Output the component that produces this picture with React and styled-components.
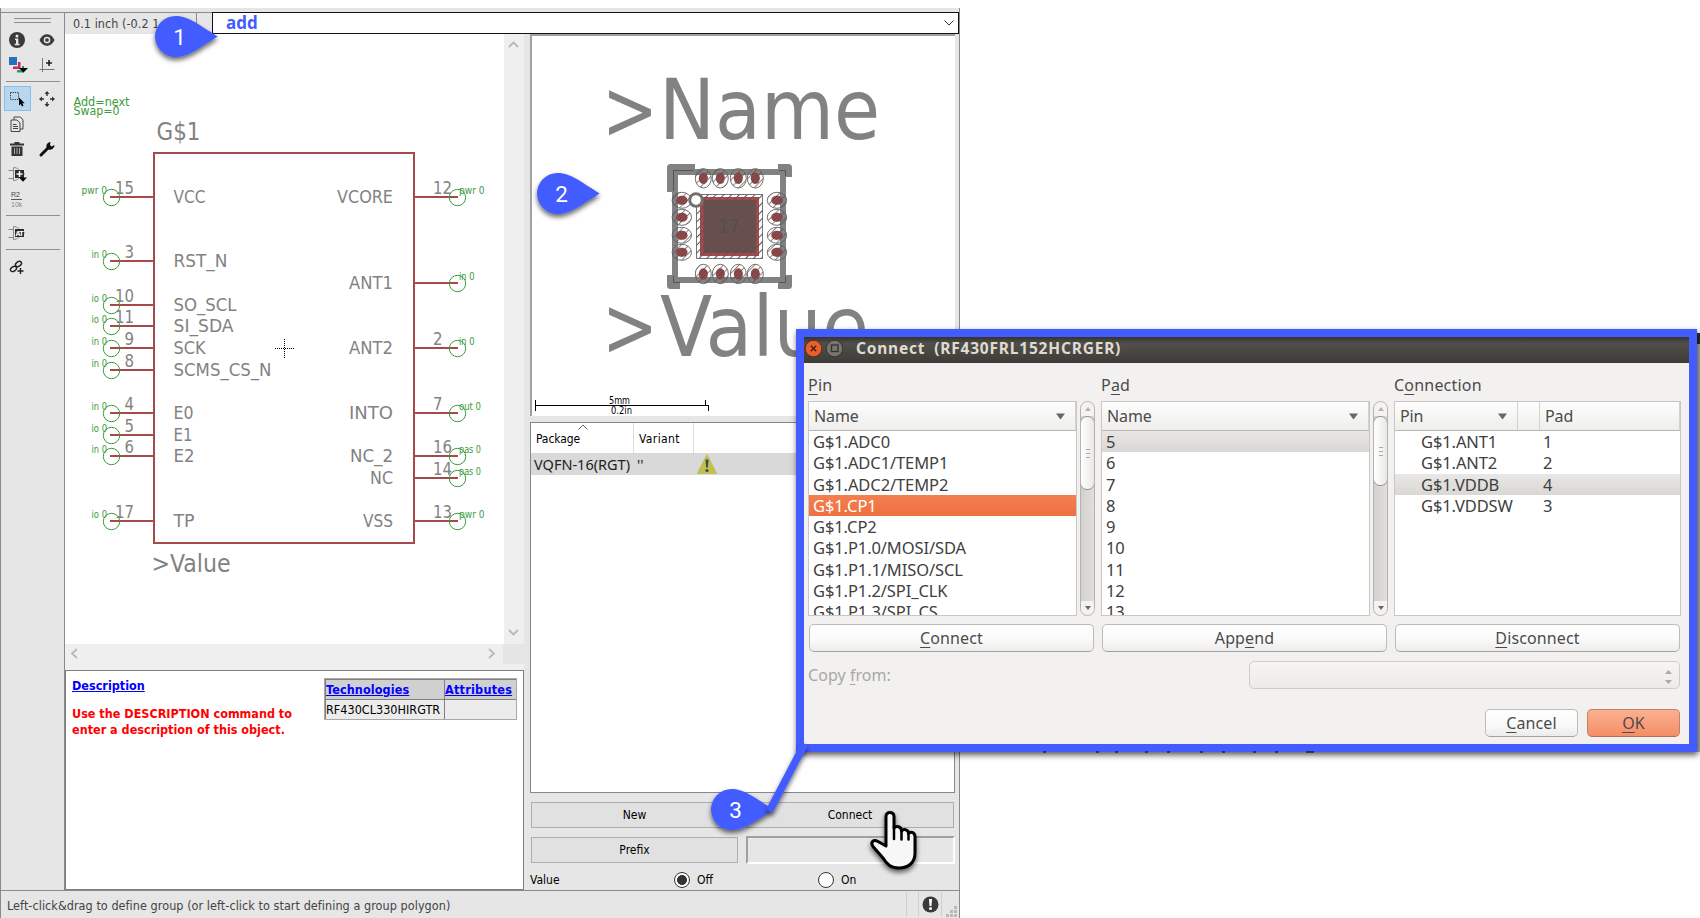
import React from 'react';
import styled, { createGlobalStyle, css } from 'styled-components';

const BLUE = '#435cff';
const RED = '#a54a4a';
const GREY = '#828282';
const GREEN = '#3c9a3c';
const TAHOMA = '"DejaVu Sans Condensed", "DejaVu Sans", sans-serif';
const UBUNTU = '"Noto Sans", "Open Sans", sans-serif';

const Global = createGlobalStyle`
  * { box-sizing: border-box; }
  body { margin: 0; background: #fff; font-family: ${TAHOMA}; font-size: 12px; overflow: hidden; }
  svg { display: block; }
`;

const Desktop = styled.div`
  position: relative;
  width: 1700px;
  height: 918px;
  overflow: hidden;
  padding-top: 8px;
`;

/* ---------- main editor window ---------- */
const Window = styled.div`
  width: 960px;
  height: 910px;
  background: #e6e6e6;
  border-left: 1px solid #8a8a8a;
  border-right: 1px solid #8a8a8a;
  display: flex;
  flex-direction: column;
`;
const TopEdge = styled.div`
  height: 5px;
  border-bottom: 1px solid #8a8a8a;
`;
const Work = styled.div`
  display: flex;
  height: 877px;
`;
const Toolbar = styled.div`
  width: 64px;
  border-right: 1px solid #8a8a8a;
  padding: 5px 4px 0 3px;
`;
const Handle = styled.div`
  height: 5px;
  margin: 0 9px 4px 10px;
  border-top: 1px solid #8f8f8f;
  border-bottom: 1px solid #8f8f8f;
`;
const ToolGroup = styled.div`
  display: grid;
  grid-template-columns: 27px 33px;
  grid-auto-rows: 25px;
`;
const ToolSep = styled.div`
  height: 1px;
  margin: 4px 0 4px 2px;
  background: #8f8f8f;
`;
const Tool = styled.div`
  display: flex;
  align-items: center;
  justify-content: center;
  padding-right: 1px;
  ${(p) => p.$active && css`
    background: #b8d6ee;
    box-shadow: inset 0 0 0 1px #86bdea;
  `}
`;
const Main = styled.div`
  flex: 1;
  display: flex;
  flex-direction: column;
`;
const CommandRow = styled.div`
  height: 21px;
  display: flex;
`;
const Coords = styled.div`
  width: 132px;
  border-right: 1px solid #8a8a8a;
  padding-left: 8px;
  line-height: 21px;
  color: #444;
  font-size: 12.5px;
  letter-spacing: 0.05px;
  white-space: nowrap;
`;
const Combo = styled.div`
  margin-left: 15px;
  flex: 1;
  margin-top: -1px;
  height: 22px;
  border: 1px solid #111;
  background: #fff;
  display: flex;
  align-items: center;
  justify-content: space-between;
  padding: 0 4px 0 13px;
  color: ${BLUE};
  font: bold 17px/20px "Open Sans", sans-serif;
`;
const Panes = styled.div`
  flex: 1;
  display: flex;
`;
const LeftPane = styled.div`
  width: 459px;
  display: flex;
  flex-direction: column;
`;
const SymbolArea = styled.div`
  display: flex;
  height: 610px;
`;
const SymbolCanvas = styled.div`
  width: 439px;
  background: #fff;
`;
const VScroll = styled.div`
  width: 20px;
  background: #efefef;
  display: flex;
  flex-direction: column;
  align-items: center;
  justify-content: space-between;
  padding: 7px 2px 8px 0;
`;
const HScroll = styled.div`
  height: 26px;
  background: #efefef;
  display: flex;
  align-items: flex-start;
  justify-content: space-between;
  padding-left: 5px;
`;
const HArrow = styled.div`
  padding-top: 4px;
  margin-left: ${(p) => p.$left || 0};
`;
const Corner = styled.div`
  width: 21px;
  height: 20px;
  background: #e5e5e5;
  margin-left: 7px;
`;
const DescriptionBox = styled.div`
  flex: 1;
  border: 1px solid #7f7f7f;
  background: #fff;
  display: flex;
  justify-content: space-between;
  padding: 7px 6px 0 6px;
  font-weight: bold;
  font-size: 12.5px;
`;
const DescText = styled.div`
  color: #f00;
  line-height: 16px;
  white-space: nowrap;
  letter-spacing: 0;
`;
const HeadLink = styled.span`
  display: block;
  color: #00f;
  text-decoration: underline;
  letter-spacing: ${(p) => p.$ls || '0'};
  margin-bottom: ${(p) => p.$gap || 0};
`;
const TechTable = styled.div`
  display: grid;
  grid-template-columns: 118px 71px;
  grid-template-rows: 19px 19px;
  gap: 1px;
  padding: 1px;
  width: 193px;
  height: 42px;
  background: #808080;
  border: 1px solid #a8a8a8;
  white-space: nowrap;
`;
const TechCell = styled.div`
  background: ${(p) => (p.$head ? '#d0d0d0' : '#ececec')};
  line-height: 19px;
  font-weight: ${(p) => (p.$head ? 'bold' : 'normal')};
  letter-spacing: 0.02px;
  color: #000;
  overflow: hidden;
`;

const RightPane = styled.div`
  flex: 1;
  padding: 0 4px 0 6px;
  display: flex;
  flex-direction: column;
`;
const PackageCanvas = styled.div`
  height: 382px;
  border-left: 2px solid #a0a0a0;
  border-top: 2px solid #a0a0a0;
  background: #fff;
  overflow: hidden;
`;
const PackageTable = styled.div`
  margin-top: 6px;
  height: 371px;
  border: 1px solid #828790;
  background: #fff;
`;
const TableHead = styled.div`
  height: 30px;
  display: flex;
`;
const Th = styled.div`
  position: relative;
  width: ${(p) => p.$w}px;
  border-right: 1px solid #dcdcdc;
  padding-left: 5px;
  line-height: 32px;
  letter-spacing: ${(p) => p.$ls || '-0.1px'};
`;
const SortMark = styled.svg`
  position: absolute;
  left: 47px;
  top: 1px;
`;
const TableRow = styled.div`
  height: 22px;
  background: #d9d9d9;
  display: flex;
  align-items: center;
  padding-left: 3px;
  font: 14.5px/21px "Noto Sans", sans-serif;
  letter-spacing: 0;
  color: #222;
`;
const RowCell = styled.div`
  width: ${(p) => p.$w}px;
  white-space: nowrap;
`;
const ButtonGrid = styled.div`
  margin: 9px 1px 0 1px;
  display: grid;
  grid-template-columns: 207px 208px;
  grid-auto-rows: 26px;
  justify-content: space-between;
  row-gap: 9px;
`;
const WinButton = styled.div`
  border: 1px solid #adadad;
  background: #e1e1e1;
  text-align: center;
  line-height: 24px;
`;
const PrefixField = styled.div`
  margin: -1px -1px 0 0;
  height: 28px;
  border: 2px solid #a0a0a0;
  border-right-color: #fff;
  border-bottom-color: #fff;
`;
const ValueRow = styled.div`
  display: grid;
  grid-template-columns: 144px 144px 1fr;
  align-items: center;
  height: 18px;
  margin-top: 8px;
`;
const RadioLabel = styled.div`
  display: flex;
  align-items: center;
  gap: 7px;
`;
const Radio = styled.div`
  width: 16px;
  height: 16px;
  border-radius: 50%;
  border: 1px solid #333;
  background: ${(p) => (p.$on ? 'radial-gradient(circle, #333 0 4.6px, #fff 5.3px)' : '#fff')};
`;
const StatusBar = styled.div`
  height: 28px;
  border-top: 1px solid #8a8a8a;
  display: flex;
  justify-content: space-between;
  padding-left: 6px;
  line-height: 30px;
  color: #444;
  font-size: 12.5px;
  letter-spacing: 0.06px;
  white-space: nowrap;
`;
const StatusCells = styled.div`
  display: flex;
  padding-top: 1px;
`;
const StatusCell = styled.div`
  width: ${(p) => p.$w}px;
  height: 25px;
  border-left: 1px solid #d0d0d0;
  display: flex;
  align-items: center;
  justify-content: center;
`;

/* ---------- Connect dialog ---------- */
const BackWindow = styled.div`
  position: absolute;
  left: 1680px;
  top: 333px;
  width: 20px;
  height: 419px;
  background: #b4b4b4;
  border-top: 11px solid #2d2d2b;
`;
const Dialog = styled.div`
  position: absolute;
  left: 796px;
  top: 329px;
  width: 901px;
  height: 423px;
  border: 8px solid ${BLUE};
  background: #f2f1ef;
  box-shadow: 1px 3px 6px rgba(0, 0, 0, 0.65);
  font-family: ${UBUNTU};
  font-size: 16px;
  color: #4b4b4b;
`;
const TitleBar = styled.div`
  height: 26px;
  background: linear-gradient(#34332f, #504f49 25%, #3d3c38);
  display: flex;
  align-items: center;
  color: #dfdbd2;
  font: bold 15.5px/22px ${UBUNTU};
  letter-spacing: 0.8px;
  word-spacing: 4px;
  white-space: pre;
`;
const TitleText = styled.span`
  margin: -4px 0 0 13px;
`;
const DialogBody = styled.div`
  padding: 12px 8px 0 4px;
`;
const Columns = styled.div`
  display: grid;
  grid-template-columns: repeat(3, 287px);
  column-gap: 6px;
`;
const Caption = styled.div`
  height: 26px;
  line-height: 20px;
  letter-spacing: 0.2px;
  u { text-underline-offset: 3px; text-decoration-thickness: 1px; }
`;
const ListRow = styled.div`
  display: flex;
  justify-content: space-between;
`;
const ListBox = styled.div`
  width: ${(p) => p.$w}px;
  height: 215px;
  border: 1px solid #c9c7c3;
  background: #fff;
  overflow: hidden;
`;
const ListHead = styled.div`
  height: 29px;
  border-bottom: 1px solid #b9b7b3;
  background: linear-gradient(#fdfdfd, #efeeec);
  display: flex;
`;
const HeadCell = styled.div`
  width: ${(p) => p.$w};
  display: flex;
  align-items: center;
  justify-content: space-between;
  padding: 0 10px 0 5px;
  letter-spacing: -0.1px;
  border-right: 1px solid #d4d2ce;
`;
const Item = styled.div`
  height: 21.3px;
  line-height: 22px;
  padding-left: ${(p) => (p.$indent ? 26 : 4)}px;
  display: flex;
  white-space: nowrap;
  font-size: 16.5px;
  letter-spacing: -0.1px;
  color: ${(p) => (p.$tone === 'hot' ? '#fff' : '#404040')};
  ${(p) => p.$tone === 'hot' && css`background: linear-gradient(#f47f50, #ee7040);`}
  ${(p) => p.$tone === 'grey' && css`background: linear-gradient(#e8e7e5, #d9d8d5);`}
`;
const ItemPin = styled.span`
  width: 122px;
`;
const Scroll = styled.div`
  width: 15px;
  height: 215px;
  border: 1px solid #b5b3af;
  border-radius: 8px;
  background: linear-gradient(90deg, #d2d1ce, #e0dfdc);
  display: flex;
  flex-direction: column;
  overflow: hidden;
`;
const ScrollEnd = styled.div`
  height: 14px;
  background: #f4f3f2;
  display: flex;
  align-items: center;
  justify-content: center;
`;
const Thumb = styled.div`
  height: ${(p) => p.$h}px;
  margin: 0 -1px;
  border: 1px solid #979592;
  border-radius: 7px;
  background: linear-gradient(90deg, #fff, #e9e8e6);
  display: flex;
  align-items: center;
  justify-content: center;
`;
const Filler = styled.div`
  flex: 1;
`;
const DlgButton = styled.div`
  width: ${(p) => p.$w}px;
  height: 28px;
  line-height: 26px;
  text-align: center;
  border: 1px solid ${(p) => (p.$primary ? '#c28268' : '#bebcb8')};
  border-bottom-color: ${(p) => (p.$primary ? '#b0705a' : '#a5a3a0')};
  border-radius: 5px;
  background: ${(p) => (p.$primary ? 'linear-gradient(#fcb092, #f48e66)' : 'linear-gradient(#fefefe, #fafafa 55%, #edeceb)')};
  letter-spacing: 0.12px;
  u { text-underline-offset: 3px; text-decoration-thickness: 1px; }
`;
const ButtonsRow = styled(Columns)`
  margin-top: 8px;
  padding-left: 1px;
`;
const CopyRow = styled.div`
  margin-top: 9px;
  display: flex;
  justify-content: space-between;
  line-height: 29px;
  color: #a9a8a6;
  letter-spacing: 0.05px;
  u { text-underline-offset: 3px; text-decoration-thickness: 1px; }
`;
const CopyCombo = styled.div`
  width: 431px;
  height: 28px;
  margin-right: 1px;
  border: 1px solid #cfcdc9;
  border-radius: 5px;
  background: linear-gradient(#f6f5f4, #ecebe9);
  display: flex;
  align-items: center;
  justify-content: flex-end;
  padding: 4px 7px 0 0;
`;
const ActionRow = styled.div`
  margin-top: 19px;
  display: flex;
  justify-content: flex-end;
  gap: 9px;
  padding-right: 1px;
`;

const Overlay = styled.svg`
  position: absolute;
  left: 0;
  top: 0;
  pointer-events: none;
`;

/* ---------- toolbar icons ---------- */
const InfoIcon = () => (
  <svg width="18" height="18" viewBox="0 0 18 18">
    <circle cx="9" cy="9" r="8" fill="#3a3a3a" />
    <path d="M7 7.5h3.3v5.3h1.2v1.4H6.7v-1.4H8V9H7z" fill="#e6e6e6" />
    <circle cx="9" cy="4.9" r="1.5" fill="#e6e6e6" />
  </svg>
);
const EyeIcon = () => (
  <svg width="18" height="14" viewBox="0 0 18 14">
    <path d="M1.5 7C4 2.2 7 1.2 9 1.2S14 2.2 16.5 7C14 11.8 11 12.8 9 12.8S4 11.8 1.5 7z" fill="#3a3a3a" />
    <circle cx="9" cy="7" r="2.6" fill="none" stroke="#e6e6e6" strokeWidth="1.5" />
  </svg>
);
const LayersIcon = () => (
  <svg width="22" height="20" viewBox="0 0 22 20">
    <path d="M3 2h8v8H3z" fill="#2472b8" />
    <path d="M12 7h2.5v7H7v-2.500h5z" fill="#d6245c" />
    <path d="M16 11h2v6.500h-7V15h5z" fill="#2a9a5a" />
    <path d="M13 13h9l-4.500 4.500z" fill="#000" />
  </svg>
);
const GridIcon = () => (
  <svg width="16" height="16" viewBox="0 0 16 16">
    <path d="M3.500 1v14M0.500 12.500h15" stroke="#777" strokeWidth="1" fill="none" />
    <path d="M10 3v6M7 6h6" stroke="#222" strokeWidth="1.600" />
  </svg>
);
const SelectIcon = () => (
  <svg width="18" height="18" viewBox="0 0 18 18">
    <rect x="2.500" y="2.500" width="8" height="7" fill="none" stroke="#333" strokeDasharray="1.200 1" />
    <path d="M11 7.500v8l1.800-1.600 1.200 2.600 1.500-.7-1.200-2.500h2.400z" fill="#000" />
  </svg>
);
const MoveIcon = () => (
  <svg width="18" height="18" viewBox="0 0 18 18" fill="#333">
    <path d="M9 1l2.500 3H9.700v2H8.300V4H6.500zM9 17l2.500-3H9.700v-2H8.300v2H6.500zM1 9l3-2.500v1.800h2v1.400H4v1.800zM17 9l-3-2.500v1.800h-2v1.400h2v1.800z" />
  </svg>
);
const CopyIcon = () => (
  <svg width="16" height="18" viewBox="0 0 16 18" fill="#e6e6e6" stroke="#444">
    <path d="M5 2h6.500l2.500 3v9H5z" />
    <path d="M2 5h6l3 3v8.500H2z" />
    <path d="M4 9.500h3.500M4 11.500h5M4 13.500h5" />
  </svg>
);
const TrashIcon = () => (
  <svg width="16" height="16" viewBox="0 0 16 16">
    <path d="M5.500 1h5v1.500H15v2H1v-2h4.500zM2.500 5.500h11V15h-11z" fill="#333" />
    <path d="M5.500 7v6M8 7v6M10.500 7v6" stroke="#aaa" />
  </svg>
);
const WrenchIcon = () => (
  <svg width="18" height="18" viewBox="0 0 18 18">
    <path d="M3 15L10 8" stroke="#111" strokeWidth="3" strokeLinecap="round" />
    <path d="M12.500 2a4.300 4.300 0 0 0-4 5.500l2 2A4.500 4.500 0 0 0 16.500 5l-3 1.500-1.500-1.500z" fill="#111" />
  </svg>
);
const GateIcon = ({ label, plus }) => (
  <svg width="20" height="18" viewBox="0 0 20 18">
    <path d="M1.500 5.500h5M1.500 13.500h5M6.500 2.500c4 0 7 3 8.500 6.500-1.500 3.500-4.500 6.500-8.500 6.500zM16 9h2" fill="none" stroke="#888" />
    <rect x="8" y="5" width="9" height="8" fill="#2b2b2b" />
    {plus && <path d="M12.500 6v6M9.500 9h6" stroke="#fff" strokeWidth="1.500" />}
    {label && <text x="8.500" y="11.800" fontSize="7" textLength="8" fontWeight="bold" fill="#fff" fontFamily="DejaVu Sans Condensed">{label}</text>}
    {plus && <path d="M12 12.500h8l-4 4.300z" fill="#000" />}
  </svg>
);
const ValueIcon = () => (
  <svg width="18" height="18" viewBox="0 0 18 18" fontFamily="Liberation Sans" fontSize="7">
    <text x="3" y="6.500" fill="#444">R2</text>
    <path d="M3 9.500h11" stroke="#555" />
    <text x="3" y="17" fill="#888">10k</text>
  </svg>
);
const LinkIcon = () => (
  <svg width="16" height="16" viewBox="0 0 16 16" fill="none" stroke="#222" strokeWidth="1.400">
    <ellipse cx="4.500" cy="10" rx="3.300" ry="2.200" transform="rotate(-35 4.500 10)" />
    <ellipse cx="9.500" cy="5" rx="3.300" ry="2.200" transform="rotate(-35 9.500 5)" />
    <path d="M11.500 9v6M8.500 12h6" />
  </svg>
);
const Chevron = ({ d, w = 11, h = 11, c = '#b8b8b8', s = 1.8 }) => (
  <svg width={w} height={h} viewBox={`0 0 ${w} ${h}`}><path d={d} fill="none" stroke={c} strokeWidth={s} /></svg>
);

/* ---------- schematic symbol ---------- */
const leftPins = [
  ['15', 197, 'VCC', 32, 'pwr 0'], ['3', 261, 'RST_N', 54, 'in 0'], ['10', 305, 'SO_SCL', 63, 'io 0'],
  ['11', 326, 'SI_SDA', 60, 'io 0'], ['9', 348, 'SCK', 32, 'in 0'], ['8', 370, 'SCMS_CS_N', 98, 'in 0'],
  ['4', 413, 'E0', 20, 'in 0'], ['5', 435, 'E1', 19, 'io 0'], ['6', 456, 'E2', 21, 'in 0'], ['17', 521, 'TP', 21, 'io 0'],
];
const rightPins = [
  ['12', 197, 'VCORE', 56, 'pwr 0'], ['', 283, 'ANT1', 44, 'in 0'], ['2', 348, 'ANT2', 44, 'in 0'],
  ['7', 413, 'INTO', 44, 'out 0'], ['16', 456, 'NC_2', 43, 'pas 0'], ['14', 478, 'NC', 23, 'pas 0'], ['13', 521, 'VSS', 30, 'pwr 0'],
];
const labelWidth = { 'pwr 0': 25.5, 'in 0': 15.5, 'io 0': 15.5, 'out 0': 22, 'pas 0': 22 };

const T = ({ len, children, ...rest }) => (
  <text textLength={len} lengthAdjust="spacingAndGlyphs" {...rest}>{children}</text>
);

const Pin = ({ side, pin: [num, y, name, w, dir] }) => {
  const left = side === 'left';
  const cx = left ? 111.5 : 457.5;
  const numW = num.length * 9.5;
  return (
    <g>
      <T x={left ? 134 - numW : 433} y={y - 3.5} len={numW} fontSize="17.500" fill={GREY}>{num}</T>
      <T x={left ? 173.5 : 393 - w} y={y + 5.8} len={w} fontSize="17.500" fill={GREY}>{name}</T>
      <path d={left ? `M110 ${y}H154` : `M414 ${y}H458`} stroke={RED} strokeWidth="2" />
      <circle cx={cx} cy={y + 0.5} r="8.200" fill="none" stroke={GREEN} />
      <T x={left ? 107 - labelWidth[dir] : 459} y={y - 3} len={labelWidth[dir]} fontSize="10" fill={GREEN}>{dir}</T>
    </g>
  );
};

const SymbolDrawing = () => (
  <svg width="439" height="610" viewBox="65 34 439 610" fontFamily={TAHOMA}>
    <T x="73.500" y="106" len="56" fontSize="12" fill={GREEN}>Add=next</T>
    <T x="73.500" y="115" len="46" fontSize="12" fill={GREEN}>Swap=0</T>
    <T x="156.500" y="139.500" len="44" fontSize="25.500" fill={GREY}>G$1</T>
    <T x="151.500" y="572.300" len="79" fontSize="25.500" fill={GREY}>&gt;Value</T>
    <rect x="154" y="153" width="260" height="390" fill="none" stroke={RED} strokeWidth="2" />
    {leftPins.map((p) => <Pin key={p[0]} side="left" pin={p} />)}
    {rightPins.map((p) => <Pin key={p[2]} side="right" pin={p} />)}
    <path d="M275 348.500h20M284.500 339v20" stroke="#000" strokeDasharray="1 1" />
  </svg>
);

/* ---------- package footprint ---------- */
const padsX = [703.3, 720.3, 738.3, 755.3];
const padsY = [200.3, 217.3, 235.3, 252.3];
const pads = [
  ...padsX.flatMap((x) => [[x, 178.3, 0], [x, 274, 0]]),
  ...padsY.flatMap((y) => [[681.8, y, 1], [777, y, 1]]),
];
const FootprintDrawing = () => (
  <svg width="423" height="380" viewBox="532 36 423 380" fontFamily={TAHOMA}>
    <defs>
      <pattern id="hatch" width="5.500" height="5.500" patternUnits="userSpaceOnUse" patternTransform="rotate(45)">
        <path d="M0.500 0V5.500" stroke="#505050" strokeWidth="1" />
      </pattern>
      <pattern id="fine" width="2.500" height="2.500" patternUnits="userSpaceOnUse" patternTransform="rotate(45)">
        <path d="M0.500 0V2.500" stroke="#5f4444" strokeWidth="1.200" />
      </pattern>
    </defs>
    <T x="602" y="138.500" len="56" fontSize="84.500" fill={GREY}>&gt;</T>
    <T x="659" y="138.500" len="221" fontSize="84.500" fill={GREY}>Name</T>
    <T x="602" y="355.500" len="56" fontSize="84.500" fill={GREY}>&gt;</T>
    <T x="660" y="355.500" len="209" fontSize="84.500" fill={GREY}>Value</T>
    <rect x="675" y="172" width="108" height="108" fill="#fff" stroke={GREY} strokeWidth="6" />
    <g fill="none" stroke={GREY} strokeWidth="7" strokeLinejoin="round">
      <path d="M670.500 192V167.500H695" />
      <path d="M778 167.500H788.500V177" />
      <path d="M670.500 275V285.500H680" />
      <path d="M778 285.500H788.500V275" />
    </g>
    <path d="M673.500 191V170.500H694M779 170.500H785.500V176M673.500 276V282.500H680M779 282.500H785.500V276" fill="none" stroke="#555" />
    <rect x="696.500" y="194.500" width="66" height="64" fill="#fff" stroke="#777" />
    <rect x="696.500" y="194.500" width="66" height="64" fill="url(#hatch)" />
    <rect x="700" y="197" width="59" height="59" fill={RED} />
    <rect x="703.500" y="200" width="52.500" height="53" fill="#6b4f4f" />
    <rect x="700" y="197" width="59" height="59" fill="url(#hatch)" opacity=".6" />
    {pads.map(([x, y, side]) => (
      <g key={`${x}-${y}`}>
        <ellipse cx={x} cy={y} rx={side ? 9.7 : 8} ry={side ? 8 : 9.7} fill="url(#hatch)" opacity=".7" />
        <ellipse cx={x} cy={y} rx={side ? 9.7 : 8} ry={side ? 8 : 9.7} fill="none" stroke="#606060" strokeWidth=".9" />
        <ellipse cx={x} cy={y} rx={side ? 5.7 : 4.5} ry={side ? 4.5 : 5.7} fill={RED} />
        <ellipse cx={x} cy={y} rx={side ? 5.7 : 4.5} ry={side ? 4.5 : 5.7} fill="url(#fine)" />
      </g>
    ))}
    <circle cx="696" cy="200" r="6.300" fill="#fff" stroke="#707070" strokeWidth="3" />
    <T x="718.500" y="232.700" len="21" fontSize="19" fill="#505050">17</T>
    <path d="M535.500 400v11M535 405.500H709M705.500 400v5M708.500 405v6" fill="none" stroke="#000" />
    <T x="609" y="404" len="21" fontSize="10" fill="#000">5mm</T>
    <T x="611" y="414" len="21" fontSize="10" fill="#000">0.2in</T>
  </svg>
);

const DropMark = () => (
  <svg width="9" height="7" viewBox="0 0 9 7"><path d="M0 .5h9L4.500 6.500z" fill="#666" /></svg>
);
const TinyArrow = ({ up, c }) => (
  <svg width="6" height="4" viewBox="0 0 6 4"><path d={up ? 'M0 4h6L3 0z' : 'M0 0h6L3 4z'} fill={c} /></svg>
);
const ScrollBar = ({ thumb }) => (
  <Scroll>
    <ScrollEnd><TinyArrow up c="#b5b5b5" /></ScrollEnd>
    <Thumb $h={thumb}>
      <svg width="4" height="9" viewBox="0 0 4 9"><path d="M0 .5h4M0 4.500h4M0 8.500h4" stroke="#aaa" /></svg>
    </Thumb>
    <Filler />
    <ScrollEnd><TinyArrow c="#666" /></ScrollEnd>
  </Scroll>
);

const pinNames = ['G$1.ADC0', 'G$1.ADC1/TEMP1', 'G$1.ADC2/TEMP2', 'G$1.CP1', 'G$1.CP2', 'G$1.P1.0/MOSI/SDA', 'G$1.P1.1/MISO/SCL', 'G$1.P1.2/SPI_CLK', 'G$1.P1.3/SPI_CS'];
const padNames = ['5', '6', '7', '8', '9', '10', '11', '12', '13'];
const connections = [['G$1.ANT1', '1'], ['G$1.ANT2', '2'], ['G$1.VDDB', '4'], ['G$1.VDDSW', '3']];

const ConnectDialog = () => (
  <Dialog>
    <TitleBar>
      <svg width="39" height="26" viewBox="0 0 39 26">
        <circle cx="9.500" cy="11.500" r="8.300" fill="#e9602f" stroke="#5a2c1c" />
        <path d="M6.800 8.800l5.400 5.400M12.200 8.800l-5.400 5.400" stroke="#4a2013" strokeWidth="1.500" />
        <circle cx="30.500" cy="11.500" r="8.300" fill="#76756e" stroke="#33322e" />
        <rect x="27.500" y="8" width="6.500" height="6.500" fill="none" stroke="#33322e" strokeWidth="1.300" />
      </svg>
      <TitleText>Connect (RF430FRL152HCRGER)</TitleText>
    </TitleBar>
    <DialogBody>
      <Columns>
        <Caption><u>P</u>in</Caption>
        <Caption>P<u>a</u>d</Caption>
        <Caption>C<u>o</u>nnection</Caption>
      </Columns>
      <Columns>
        <ListRow>
          <ListBox $w={269}>
            <ListHead><HeadCell $w="267px">Name<DropMark /></HeadCell></ListHead>
            {pinNames.map((n) => <Item key={n} $tone={n === 'G$1.CP1' ? 'hot' : undefined}>{n}</Item>)}
          </ListBox>
          <ScrollBar thumb={74} />
        </ListRow>
        <ListRow>
          <ListBox $w={269}>
            <ListHead><HeadCell $w="267px">Name<DropMark /></HeadCell></ListHead>
            {padNames.map((n) => <Item key={n} $tone={n === '5' ? 'grey' : undefined}>{n}</Item>)}
          </ListBox>
          <ScrollBar thumb={70} />
        </ListRow>
        <ListBox $w={287}>
          <ListHead>
            <HeadCell $w="123px">Pin<DropMark /></HeadCell>
            <HeadCell $w="22px" />
            <HeadCell $w="140px">Pad</HeadCell>
          </ListHead>
          {connections.map(([a, b]) => (
            <Item key={a} $indent $tone={b === '4' ? 'grey' : undefined}><ItemPin>{a}</ItemPin>{b}</Item>
          ))}
        </ListBox>
      </Columns>
      <ButtonsRow>
        <DlgButton $w={285}><u>C</u>onnect</DlgButton>
        <DlgButton $w={285}>App<u>e</u>nd</DlgButton>
        <DlgButton $w={285}><u>D</u>isconnect</DlgButton>
      </ButtonsRow>
      <CopyRow>
        <span>Copy <u>f</u>rom:</span>
        <CopyCombo>
          <svg width="7" height="14" viewBox="0 0 7 14"><path d="M0 4h7L3.500 0zM0 10h7l-3.500 4z" fill="#aaa" /></svg>
        </CopyCombo>
      </CopyRow>
      <ActionRow>
        <DlgButton $w={93}><u>C</u>ancel</DlgButton>
        <DlgButton $w={93} $primary><u>O</u>K</DlgButton>
      </ActionRow>
    </DialogBody>
  </Dialog>
);

const Callout = ({ x, y, n }) => (
  <g transform={`translate(${x} ${y})`}>
    <path d="M0-20.500C12-20.500 20-14 42.200 0C20 14 12 20.500 0 20.500A20.500 20.500 0 0 1 0-20.500z" fill={BLUE} filter="url(#shade)" />
    <text x="4" y="8.500" textAnchor="middle" fontFamily="Roboto, sans-serif" fontSize="22.500" fill="#fff">{n}</text>
  </g>
);

export default function App() {
  return (
    <Desktop>
      <Global />
      <Window>
        <TopEdge />
        <Work>
          <Toolbar>
            <Handle />
            <ToolGroup>
              <Tool><InfoIcon /></Tool><Tool><EyeIcon /></Tool>
              <Tool><LayersIcon /></Tool><Tool><GridIcon /></Tool>
            </ToolGroup>
            <ToolSep />
            <ToolGroup>
              <Tool $active><SelectIcon /></Tool><Tool><MoveIcon /></Tool>
              <Tool><CopyIcon /></Tool><Tool />
              <Tool><TrashIcon /></Tool><Tool><WrenchIcon /></Tool>
              <Tool><GateIcon plus /></Tool><Tool />
              <Tool><ValueIcon /></Tool><Tool />
            </ToolGroup>
            <ToolSep />
            <ToolGroup><Tool><GateIcon label="AT" /></Tool></ToolGroup>
            <ToolSep />
            <ToolGroup><Tool><LinkIcon /></Tool></ToolGroup>
          </Toolbar>
          <Main>
            <CommandRow>
              <Coords>0.1 inch (-0.2 1</Coords>
              <Combo>add<Chevron w={10} h={6} d="M.5 .5l4.500 4.500 4.500-4.500" c="#333" s={1} /></Combo>
            </CommandRow>
            <Panes>
              <LeftPane>
                <SymbolArea>
                  <SymbolCanvas><SymbolDrawing /></SymbolCanvas>
                  <VScroll>
                    <Chevron h={7} d="M1 6l4.500-4.500L10 6" />
                    <Chevron h={7} d="M1 1l4.500 4.500L10 1" />
                  </VScroll>
                </SymbolArea>
                <HScroll>
                  <HArrow><Chevron w={8} d="M7 1L2 5.500 7 10" /></HArrow>
                  <HArrow $left="auto"><Chevron w={8} d="M1 1l5 4.500L1 10" /></HArrow>
                  <Corner />
                </HScroll>
                <DescriptionBox>
                  <DescText>
                    <HeadLink $gap="12px">Description</HeadLink>
                    Use the DESCRIPTION command to<br />enter a description of this object.
                  </DescText>
                  <TechTable>
                    <TechCell $head><HeadLink $ls="0.12px">Technologies</HeadLink></TechCell>
                    <TechCell $head><HeadLink $ls="0.25px">Attributes</HeadLink></TechCell>
                    <TechCell>RF430CL330HIRGTR</TechCell>
                    <TechCell />
                  </TechTable>
                </DescriptionBox>
              </LeftPane>
              <RightPane>
                <PackageCanvas><FootprintDrawing /></PackageCanvas>
                <PackageTable>
                  <TableHead>
                    <Th $w={103}>
                      Package
                      <SortMark width="10" height="6" viewBox="0 0 10 6"><path d="M.5 5.500L5 1l4.500 4.500" fill="none" stroke="#666" /></SortMark>
                    </Th>
                    <Th $w={60} $ls="0.4px">Variant</Th>
                  </TableHead>
                  <TableRow>
                    <RowCell $w={103}>VQFN-16(RGT)</RowCell>
                    <RowCell $w={60}>''</RowCell>
                    <svg width="20" height="20" viewBox="0 0 20 20">
                      <path d="M10 .5L19.800 19.500H.2z" fill="#c3c04a" stroke="#b9b75a" strokeWidth=".6" />
                      <path d="M8.500 5.500h3l-.6 8H9.100z" fill="#3a4a58" />
                      <circle cx="10" cy="16.500" r="1.600" fill="#3a4a58" />
                    </svg>
                  </TableRow>
                </PackageTable>
                <ButtonGrid>
                  <WinButton>New</WinButton>
                  <WinButton>Connect</WinButton>
                  <WinButton>Prefix</WinButton>
                  <PrefixField />
                </ButtonGrid>
                <ValueRow>
                  <span>Value</span>
                  <RadioLabel><Radio $on />Off</RadioLabel>
                  <RadioLabel><Radio />On</RadioLabel>
                </ValueRow>
              </RightPane>
            </Panes>
          </Main>
        </Work>
        <StatusBar>
          <span>Left-click&amp;drag to define group (or left-click to start defining a group polygon)</span>
          <StatusCells>
            <StatusCell $w={12} />
            <StatusCell $w={23}>
              <svg width="17" height="17" viewBox="0 0 17 17">
                <circle cx="8.500" cy="8.500" r="8" fill="#3a3a3a" />
                <path d="M7 3h3l-.5 7h-2z" fill="#fff" /><circle cx="8.500" cy="12.500" r="1.500" fill="#fff" />
              </svg>
            </StatusCell>
            <StatusCell $w={18}>
              <svg width="12" height="12" viewBox="0 0 12 12" fill="#b8b8b8" transform="translate(1 7)">
                <path d="M8 0h3v3H8zM4 4h3v3H4zM8 4h3v3H8zM0 8h3v3H0zM4 8h3v3H4zM8 8h3v3H8z" />
              </svg>
            </StatusCell>
          </StatusCells>
        </StatusBar>
      </Window>

      <BackWindow />
      <ConnectDialog />

      <Overlay width="1700" height="918" viewBox="0 0 1700 918">
        <defs>
          <filter id="shade" x="-30%" y="-30%" width="160%" height="170%">
            <feDropShadow dx="0" dy="3" stdDeviation="2.500" floodOpacity=".6" />
          </filter>
        </defs>
        <path d="M1043 752h3M1096 752h3M1115 752h3M1145 752h3M1167 752h3M1200 752h3M1222 752h3M1253 752h3M1275 752h3M1306 752h8" stroke="#000" strokeWidth="1" />
        <Callout x={175.5} y={36.5} n="1" />
        <Callout x={557.5} y={193.5} n="2" />
        <Callout x={731.5} y={809.5} n="3" />
        <path d="M771 808L803 747" stroke={BLUE} strokeWidth="7.500" strokeLinecap="round" filter="url(#shade)" />
        <g filter="url(#shade)" stroke="#000" strokeWidth="3" strokeLinejoin="round" strokeLinecap="round">
          <path
            d="M886 846V816.500C886 811 894 811 894 816.500V828C896 825.500 901.500 826 901.500 831C904 828.500 908.500 829.500 908.500 833.500C911 831 915 832.500 915 837V853C915 863 908 868 899 868C891 868 887 864.500 883 858L873 846.500C870 842 873.500 839 878 841.500Z"
            fill="#f7f7f7"
          />
          <path d="M894 827v12M901.500 831v8.500M908.500 833.500v6" fill="none" strokeWidth="2.500" />
        </g>
      </Overlay>
    </Desktop>
  );
}
